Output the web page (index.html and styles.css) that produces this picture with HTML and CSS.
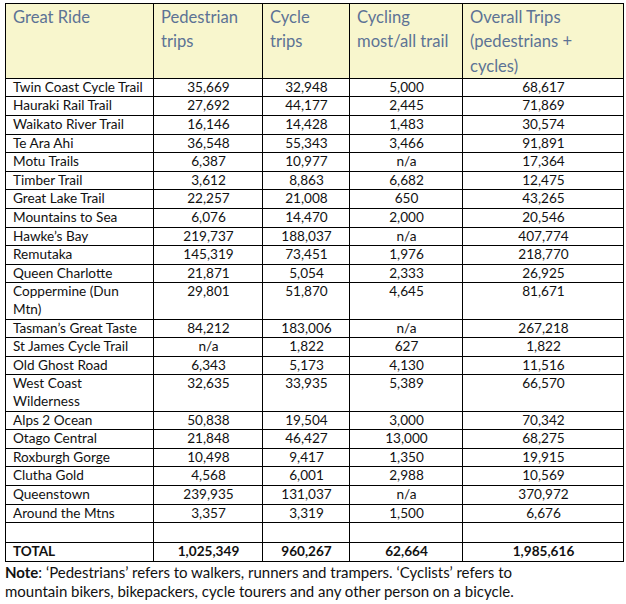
FILE: index.html
```html
<!DOCTYPE html>
<html>
<head>
<meta charset="utf-8">
<link rel="stylesheet" href="styles.css">
</head>
<body>
<div class="page">
<table class="rides">
<colgroup>
<col class="c1"><col class="c2"><col class="c3"><col class="c4"><col class="c5">
</colgroup>
<thead>
<tr>
<th>Great Ride</th>
<th>Pedestrian trips</th>
<th>Cycle trips</th>
<th>Cycling most/all trail</th>
<th>Overall Trips (pedestrians + cycles)</th>
</tr>
</thead>
<tbody>
<tr><td>Twin Coast Cycle Trail</td><td>35,669</td><td>32,948</td><td>5,000</td><td>68,617</td></tr>
<tr><td>Hauraki Rail Trail</td><td>27,692</td><td>44,177</td><td>2,445</td><td>71,869</td></tr>
<tr><td>Waikato River Trail</td><td>16,146</td><td>14,428</td><td>1,483</td><td>30,574</td></tr>
<tr><td>Te Ara Ahi</td><td>36,548</td><td>55,343</td><td>3,466</td><td>91,891</td></tr>
<tr><td>Motu Trails</td><td>6,387</td><td>10,977</td><td>n/a</td><td>17,364</td></tr>
<tr><td>Timber Trail</td><td>3,612</td><td>8,863</td><td>6,682</td><td>12,475</td></tr>
<tr><td>Great Lake Trail</td><td>22,257</td><td>21,008</td><td>650</td><td>43,265</td></tr>
<tr><td>Mountains to Sea</td><td>6,076</td><td>14,470</td><td>2,000</td><td>20,546</td></tr>
<tr><td>Hawke’s Bay</td><td>219,737</td><td>188,037</td><td>n/a</td><td>407,774</td></tr>
<tr><td>Remutaka</td><td>145,319</td><td>73,451</td><td>1,976</td><td>218,770</td></tr>
<tr><td>Queen Charlotte</td><td>21,871</td><td>5,054</td><td>2,333</td><td>26,925</td></tr>
<tr><td>Coppermine (Dun Mtn)</td><td>29,801</td><td>51,870</td><td>4,645</td><td>81,671</td></tr>
<tr><td>Tasman’s Great Taste</td><td>84,212</td><td>183,006</td><td>n/a</td><td>267,218</td></tr>
<tr><td>St James Cycle Trail</td><td>n/a</td><td>1,822</td><td>627</td><td>1,822</td></tr>
<tr><td>Old Ghost Road</td><td>6,343</td><td>5,173</td><td>4,130</td><td>11,516</td></tr>
<tr><td>West Coast Wilderness</td><td>32,635</td><td>33,935</td><td>5,389</td><td>66,570</td></tr>
<tr><td>Alps 2 Ocean</td><td>50,838</td><td>19,504</td><td>3,000</td><td>70,342</td></tr>
<tr><td>Otago Central</td><td>21,848</td><td>46,427</td><td>13,000</td><td>68,275</td></tr>
<tr><td>Roxburgh Gorge</td><td>10,498</td><td>9,417</td><td>1,350</td><td>19,915</td></tr>
<tr><td>Clutha Gold</td><td>4,568</td><td>6,001</td><td>2,988</td><td>10,569</td></tr>
<tr><td>Queenstown</td><td>239,935</td><td>131,037</td><td>n/a</td><td>370,972</td></tr>
<tr><td>Around the Mtns</td><td>3,357</td><td>3,319</td><td>1,500</td><td>6,676</td></tr>
<tr class="empty"><td></td><td></td><td></td><td></td><td></td></tr>
<tr class="total"><td>TOTAL</td><td>1,025,349</td><td>960,267</td><td>62,664</td><td>1,985,616</td></tr>
</tbody>
</table>
<p class="note"><b>Note</b>: ‘Pedestrians’ refers to walkers, runners and trampers. ‘Cyclists’ refers to<br>mountain bikers, bikepackers, cycle tourers and any other person on a bicycle.</p>
</div>
</body>
</html>
```
FILE: styles.css
```css
html, body {
  margin: 0;
  padding: 0;
  background: #ffffff;
}
.page {
  padding: 3px 0 0 5px;
  width: 618px;
  font-family: Lato, "Open Sans", sans-serif;
  color: #111111;
}
.rides {
  border-collapse: collapse;
  table-layout: fixed;
  width: 618px;
}
.c1 { width: 148px; }
.c2 { width: 109px; }
.c3 { width: 87px; }
.c4 { width: 113px; }
.c5 { width: 161px; }
.rides th, .rides td {
  border: 1px solid #000;
  padding: 0 6px 0 7px;
  vertical-align: top;
}
.rides th {
  background: #f8f6cd;
  color: #5d7395;
  font-weight: normal;
  font-size: 16.6px;
  line-height: 24.3px;
  text-align: left;
  padding-top: 1px;
  padding-bottom: 0;
  height: 73px;
  box-sizing: border-box;
}
.rides td {
  font-size: 13.6px;
  line-height: 17.6px;
  text-align: center;
}
.rides td:first-child {
  text-align: left;
}
.empty td {
  height: 19px;
}
.total td {
  font-weight: bold;
}
.note {
  margin: 0;
  padding: 1px 0 0 0;
  font-size: 15px;
  line-height: 19px;
  color: #111111;
}
```
